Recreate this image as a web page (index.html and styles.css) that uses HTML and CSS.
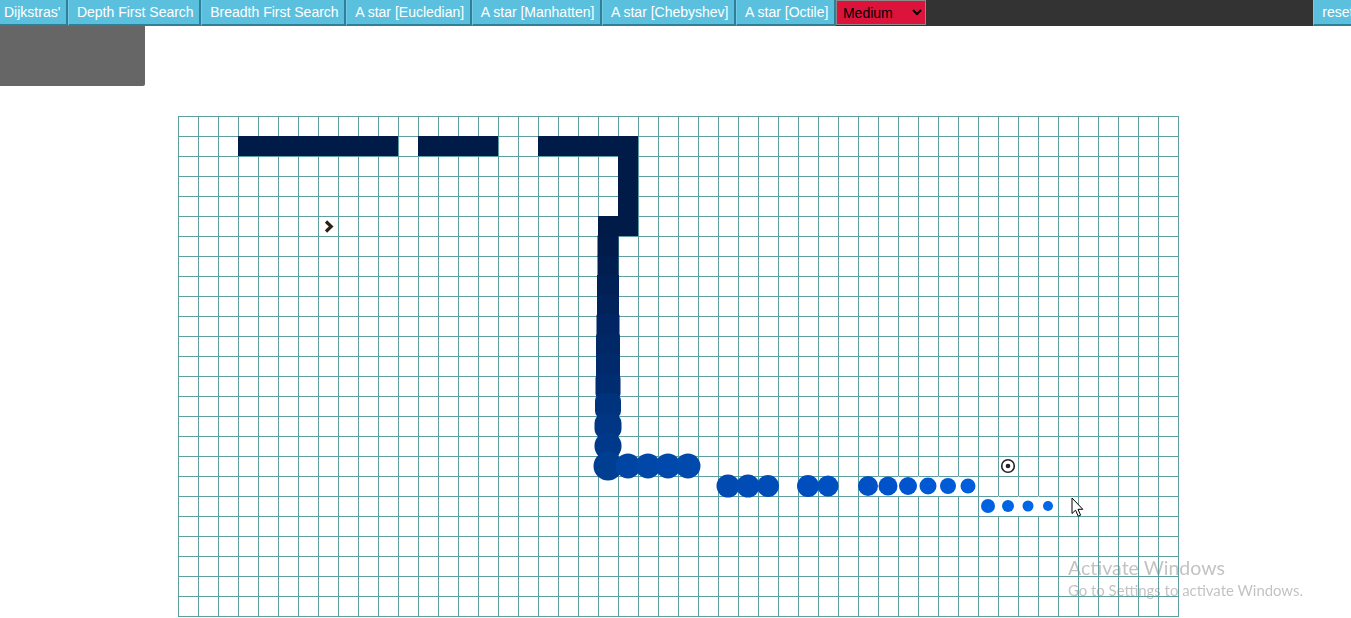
FILE: index.html
```html
<!DOCTYPE html>
<html lang="en">
<head>
<meta charset="utf-8">
<title>Pathfinding Visualizer</title>
<link rel="stylesheet" href="styles.css">
</head>
<body>
<nav class="topbar">
  <button class="algo first">Dijkstras'</button>
  <button class="algo">Depth First Search</button>
  <button class="algo">Breadth First Search</button>
  <button class="algo">A star [Eucledian]</button>
  <button class="algo">A star [Manhatten]</button>
  <button class="algo">A star [Chebyshev]</button>
  <button class="algo">A star [Octile]</button>
  <select class="speed">
    <option>Slow</option>
    <option selected>Medium</option>
    <option>Fast</option>
  </select>
  <button class="algo reset">reset</button>
</nav>
<div class="status"></div>
<main class="board">
  <div class="grid" id="grid"></div>
</main>
<div class="watermark">
  <div class="wm-title">Activate Windows</div>
  <div class="wm-sub">Go to Settings to activate Windows.</div>
</div>
<svg class="cursor" width="13" height="21" viewBox="0 0 13 21">
  <path d="M1 1 L1 16.5 L4.6 13.2 L7.2 19.2 L9.6 18.2 L7 12.3 L11.8 12.3 Z" fill="#fff" stroke="#000" stroke-width="1" stroke-linejoin="round"/>
</svg>
<script src="script.js"></script>
</body>
</html>
```

FILE: styles.css
```css
* { box-sizing: border-box; }

body {
  margin: 0;
  background: #fff;
  font-family: "Liberation Sans", Arial, sans-serif;
  overflow: hidden;
}

.topbar {
  display: flex;
  height: 26px;
  background: #333;
  overflow: hidden;
}

.algo {
  height: 26px;
  margin: 0;
  padding: 0 5.6px 0 8px;
  flex: none;
  background: #5bc0de;
  color: #fff;
  font-family: "Liberation Sans", Arial, sans-serif;
  font-size: 14px;
  border: 0;
  border-left: 1px solid #74cbe6;
  border-right: 2px solid #2e7f98;
  border-bottom: 2px solid #2e7f98;
  white-space: nowrap;
  cursor: pointer;
}

.algo.first { margin-left: -5px; }

.algo.reset {
  margin-left: auto;
  margin-right: -10px;
}

.speed {
  flex: none;
  width: 90px;
  height: 25px;
  margin: 0;
  padding: 0 0 0 2px;
  background-color: #dc143c;
  color: #000;
  font-family: "Liberation Sans", Arial, sans-serif;
  font-size: 14px;
  border: 1px solid #8a8a8a;
  border-radius: 0;
}

.status {
  width: 145px;
  height: 60px;
  background: #666;
  border-bottom-right-radius: 2px;
}

.board {
  padding: 30px 0 0 178px;
}

.grid {
  display: grid;
  grid-template-columns: repeat(50, 20px);
  grid-auto-rows: 20px;
  width: max-content;
  border-right: 1px solid #5f9ea0;
  border-bottom: 1px solid #5f9ea0;
}

.cell {
  border-left: 1px solid #5f9ea0;
  border-top: 1px solid #5f9ea0;
}

.cell.wall {
  background: #011b48;
  border-color: #011b48;
}

.cell.open {
  border-left-color: #fff;
}

.cell.marked {
  position: relative;
}

.dot {
  position: absolute;
  left: 9px;
  top: 9px;
  transform: translate(-50%, -50%);
  z-index: 1;
}

.dot.round {
  filter: blur(0.5px);
}

.icon {
  position: absolute;
  left: 0;
  top: 0;
  z-index: 2;
}

.watermark {
  position: fixed;
  left: 1068px;
  top: 556px;
  font-family: Lato, "Noto Sans", sans-serif;
  color: rgba(120, 120, 120, 0.45);
  z-index: 5;
}

.wm-title {
  font-size: 19.5px;
  line-height: 24px;
}

.wm-sub {
  font-size: 14.9px;
  line-height: 21px;
}

.cursor {
  position: fixed;
  left: 1071px;
  top: 497px;
  z-index: 6;
}
```

FILE: script.js
```js
(function () {
  var ROWS = 25, COLS = 50;
  var grid = document.getElementById('grid');

  var walls = {};
  function wall(r, c) { walls[r + ',' + c] = true; }
  var c, r;
  for (c = 3; c <= 10; c++) wall(1, c);
  for (c = 12; c <= 15; c++) wall(1, c);
  for (c = 18; c <= 22; c++) wall(1, c);
  for (r = 2; r <= 5; r++) wall(r, 22);
  wall(5, 21);

  // visited cells: size, corner radius, colour, open (no left border)
  var dots = {};
  function dot(r, c, d, rad, color, open) {
    dots[r + ',' + c] = { d: d, rad: rad, color: color, open: !!open };
  }
  dot(6, 21, 21, 0, '#011c4b');
  dot(7, 21, 21, 0, '#011e50');
  dot(8, 21, 22, 0, '#012055');
  dot(9, 21, 22, 0, '#01225a');
  dot(10, 21, 23, 1, '#002562');
  dot(11, 21, 24, 2, '#002867');
  dot(12, 21, 24, 3, '#002a6c');
  dot(13, 21, 25, 5, '#002d72');
  dot(14, 21, 26, 8, '#00337e');
  dot(15, 21, 27, 11, '#003684');
  dot(16, 21, 27, 13, '#00398a');
  dot(17, 21, 29, 50, '#003e92');

  dot(17, 22, 25, 50, '#0045a4');
  dot(17, 23, 25, 50, '#0047a8');
  dot(17, 24, 25, 50, '#0048ab');
  dot(17, 25, 25, 50, '#004aae');

  dot(18, 27, 23, 50, '#004ab2');
  dot(18, 28, 23, 50, '#004bb5');
  dot(18, 29, 22, 50, '#004db8');
  dot(18, 31, 22, 50, '#004ebd');
  dot(18, 32, 21, 50, '#0050c2');

  dot(18, 34, 20, 50, '#0050c6');
  dot(18, 35, 19, 50, '#0052ca', true);
  dot(18, 36, 18, 50, '#0054cd', true);
  dot(18, 37, 17, 50, '#0058d4', true);
  dot(18, 38, 16, 50, '#005bd8', true);
  dot(18, 39, 15, 50, '#005edc', true);

  dot(19, 40, 14, 50, '#0062e0');
  dot(19, 41, 12, 50, '#0064e3', true);
  dot(19, 42, 11, 50, '#0066e6', true);
  dot(19, 43, 10, 50, '#0068e8', true);

  var START = '5,7', TARGET = '17,41';

  for (r = 0; r < ROWS; r++) {
    for (c = 0; c < COLS; c++) {
      var key = r + ',' + c;
      var cell = document.createElement('div');
      cell.className = 'cell';
      if (walls[key]) cell.classList.add('wall');
      var info = dots[key];
      if (info) {
        cell.classList.add('marked');
        if (info.open) cell.classList.add('open');
        var d = document.createElement('div');
        d.className = 'dot' + (info.rad >= 50 ? ' round' : '');
        d.style.width = info.d + 'px';
        d.style.height = info.d + 'px';
        d.style.background = info.color;
        d.style.borderRadius = info.rad >= 50 ? '50%' : info.rad + 'px';
        cell.appendChild(d);
      }
      if (key === START) {
        cell.classList.add('marked');
        cell.innerHTML = '<svg class="icon" width="19" height="19" viewBox="0 0 19 19">' +
          '<polyline points="7,4.5 12.2,9.5 7,14.5" fill="none" stroke="#2b2016" stroke-width="3.2" stroke-linejoin="miter"/></svg>';
      }
      if (key === TARGET) {
        cell.classList.add('marked');
        cell.innerHTML = '<svg class="icon" width="19" height="19" viewBox="0 0 19 19">' +
          '<circle cx="9" cy="9" r="6.3" fill="none" stroke="#222" stroke-width="1.6"/>' +
          '<circle cx="9" cy="9" r="2.3" fill="#222"/></svg>';
      }
      grid.appendChild(cell);
    }
  }
})();
```
